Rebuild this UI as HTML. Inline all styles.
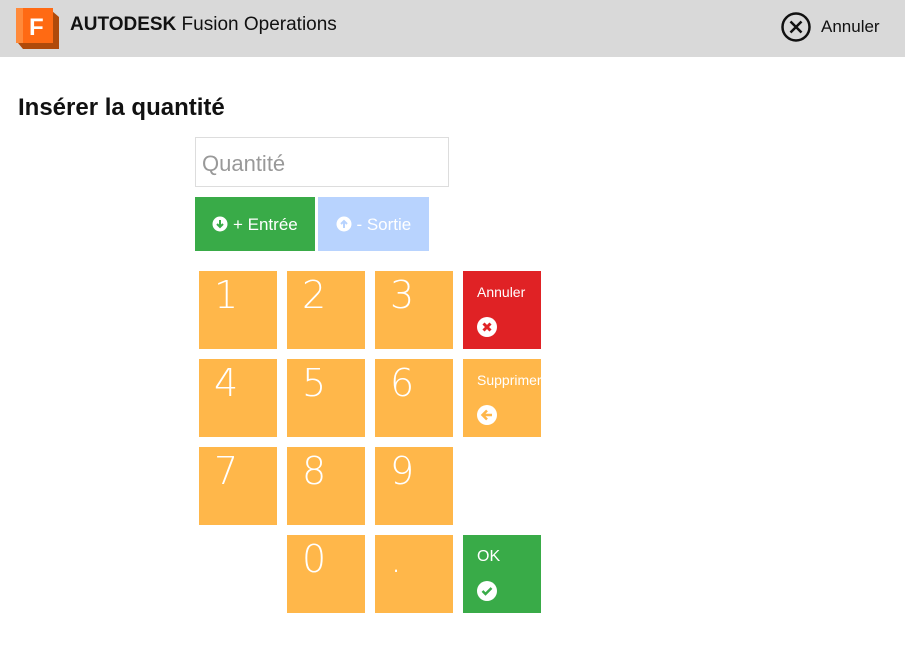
<!DOCTYPE html>
<html><head><meta charset="utf-8"><style>
body{margin:0;width:905px;height:668px;background:#fff;font-family:"Liberation Sans",sans-serif;position:relative;overflow:hidden}
.hdr{position:absolute;left:0;top:0;width:905px;height:57px;background:#d9d9d9}
.abs{position:absolute}
.t{position:absolute;width:78px;height:78px;background:#ffb74a;color:#fff;font-size:38px;font-family:"DejaVu Sans ExtraLight","DejaVu Sans Light","Liberation Sans",sans-serif;font-weight:200}
.t span{position:absolute;left:15px;top:2px}
.s{font-size:14px;font-family:"Liberation Sans",sans-serif;font-weight:normal}
</style></head><body>
<div class="hdr">
<svg class="abs" style="left:15px;top:7px" width="44" height="42"><polygon points="3,4 37,4 44,10 44,42 8,42 3,36" fill="#b04a0a"/><rect x="1" y="1" width="37" height="35" fill="#ff6a13"/><polygon points="1,1 8,1 8,36 1,36" fill="#ff8a3a"/><text x="14" y="28" font-family="Liberation Sans" font-weight="bold" font-size="24" fill="#fff">F</text></svg>
<div class="abs" style="left:70px;top:14px;font-size:19px;color:#111"><b>AUTODESK</b> Fusion Operations</div>
<svg class="abs" style="left:780px;top:11px" width="32" height="32"><circle cx="16" cy="16" r="13.5" fill="none" stroke="#111" stroke-width="2.5"/><path d="M10.5 10.5L21.5 21.5M21.5 10.5L10.5 21.5" stroke="#111" stroke-width="2.5"/></svg>
<div class="abs" style="left:821px;top:17px;font-size:17px;color:#111">Annuler</div>
</div>
<div class="abs" style="left:18px;top:94px;font-size:24px;font-weight:bold;color:#111">Insérer la quantité</div>
<div class="abs" style="left:195px;top:137px;font-size:22px;color:#999;line-height:52px;padding-left:6px;box-sizing:border-box;width:254px;height:50px;border:1px solid #ddd">Quantité</div>
<div class="abs" style="left:195px;top:197px;width:120px;height:54px;background:#39ab48;color:#fff;font-size:17px;line-height:56px;text-align:center"><svg width="16" height="16" style="vertical-align:-2px"><circle cx="8" cy="8" r="7.5" fill="#fff"/><path d="M8 4v7M5 8l3 3 3-3" stroke="#39ab48" stroke-width="2" fill="none"/></svg> + Entrée</div>
<div class="abs" style="left:318px;top:197px;width:111px;height:54px;background:#b8d3fe;color:#fff;font-size:17px;line-height:56px;text-align:center"><svg width="16" height="16" style="vertical-align:-2px"><circle cx="8" cy="8" r="7.5" fill="#fff"/><path d="M8 12V5M5 8l3-3 3 3" stroke="#b8d3fe" stroke-width="2" fill="none"/></svg> - Sortie</div>
<div class="t" style="left:199px;top:271px"><span>1</span></div>
<div class="t" style="left:287px;top:271px"><span>2</span></div>
<div class="t" style="left:375px;top:271px"><span>3</span></div>
<div class="t" style="left:463px;top:271px;background:#e02225"><span class="s" style="top:13px;left:14px">Annuler</span><svg class="abs" style="left:14px;top:46px" width="20" height="20"><circle cx="10" cy="10" r="10" fill="#fff"/><path d="M6.5 6.5l7 7M13.5 6.5l-7 7" stroke="#e02225" stroke-width="3"/></svg></div>
<div class="t" style="left:199px;top:359px"><span>4</span></div>
<div class="t" style="left:287px;top:359px"><span>5</span></div>
<div class="t" style="left:375px;top:359px"><span>6</span></div>
<div class="t" style="left:463px;top:359px;overflow:hidden"><span class="s" style="top:13px;left:14px">Supprimer</span><svg class="abs" style="left:14px;top:46px" width="20" height="20"><circle cx="10" cy="10" r="10" fill="#fff"/><path d="M15 10H6M10 5.5L5.5 10 10 14.5" stroke="#ffb74a" stroke-width="2.5" fill="none"/></svg></div>
<div class="t" style="left:199px;top:447px"><span>7</span></div>
<div class="t" style="left:287px;top:447px"><span>8</span></div>
<div class="t" style="left:375px;top:447px"><span>9</span></div>
<div class="t" style="left:287px;top:535px"><span>0</span></div>
<div class="t" style="left:375px;top:535px"><span>.</span></div>
<div class="t" style="left:463px;top:535px;background:#39ab48"><span class="s" style="top:13px;left:14px;font-size:16px">OK</span><svg class="abs" style="left:14px;top:46px" width="20" height="20"><circle cx="10" cy="10" r="10" fill="#fff"/><path d="M5.5 10l3 3 6-6" stroke="#39ab48" stroke-width="2.5" fill="none"/></svg></div>
</body></html>
